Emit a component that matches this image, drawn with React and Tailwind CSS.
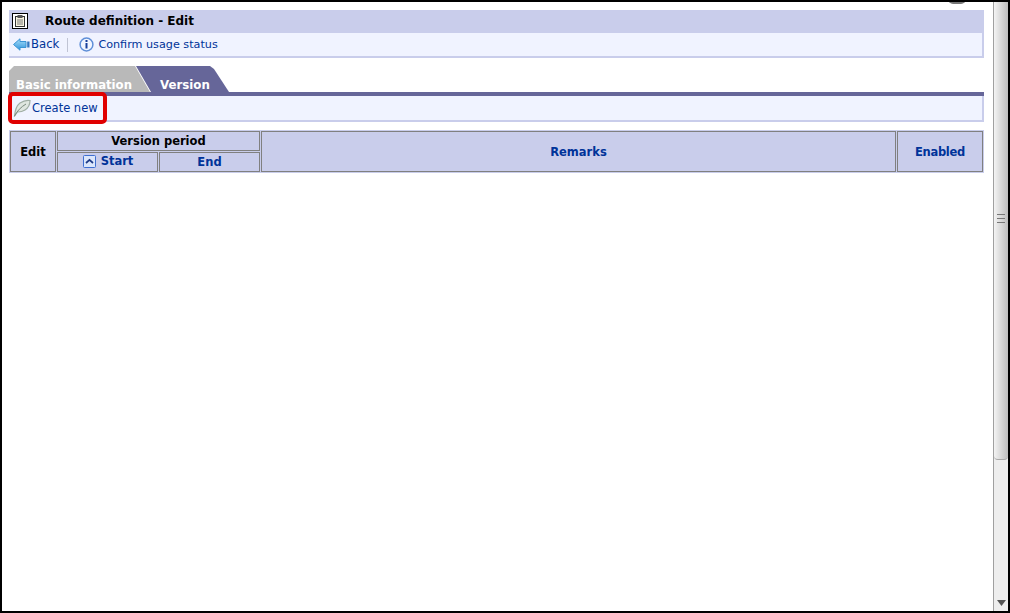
const font = { fontFamily: '"DejaVu Sans", sans-serif' };

function ClipboardIcon() {
  return (
    <svg width="16" height="16" viewBox="0 0 16 16" className="block">
      <rect x="0.5" y="0.5" width="15" height="15" fill="#fff" stroke="#000" />
      <rect x="3.5" y="3.500" width="9" height="10" fill="#f7f3df" stroke="#333" />
      <rect x="5.500" y="2" width="5" height="3" fill="#555" />
      <path d="M5 7h6M5 9h6M5 11h6" stroke="#777" strokeWidth="1" />
    </svg>
  );
}

function BackIcon() {
  return (
    <svg width="18" height="13" viewBox="0 0 18 13" className="block">
      <defs>
        <linearGradient id="backFill" x1="0" y1="0" x2="0" y2="1">
          <stop offset="0" stopColor="#a8def8" />
          <stop offset="1" stopColor="#2f94dc" />
        </linearGradient>
      </defs>
      <path d="M0.500 6.500 L7 0.800 V3.500 H13 V9.500 H7 V12.200 Z" fill="url(#backFill)" stroke="#3a94d4" strokeWidth="1" />
      <rect x="14.200" y="3.500" width="2.300" height="6" fill="#3478c0" />
    </svg>
  );
}

function InfoIcon() {
  return (
    <svg width="15" height="15" viewBox="0 0 15 15" className="block">
      <circle cx="7.5" cy="7.5" r="6.400" fill="#f2f6ff" stroke="#5f8fd8" strokeWidth="1.500" />
      <rect x="6.500" y="3" width="2" height="2" fill="#173f9c" />
      <rect x="6.500" y="6" width="2" height="5.500" fill="#173f9c" />
    </svg>
  );
}

function FeatherIcon() {
  return (
    <svg width="18" height="18" viewBox="0 0 18 18" className="block">
      <path d="M1.500 17 C2 12 3 7 7 4 C10 2 14 1 17 1.500 C17 5 15 9 12 11 C9 13 7 13 4.500 13 Z" fill="#dfe6e0" stroke="#a0aea4" strokeWidth="1.200" />
      <path d="M1.500 17 C4 12 8 8 13 5" fill="none" stroke="#78887c" strokeWidth="1" />
    </svg>
  );
}

function SortIcon() {
  return (
    <svg width="13" height="13" viewBox="0 0 13 13" className="block">
      <rect x="0.5" y="0.5" width="12" height="12" rx="1" fill="#dbe6fb" stroke="#3f6fd0" />
      <path d="M3 8 L6.500 4.800 L10 8" fill="none" stroke="#1d3a86" strokeWidth="1.700" />
    </svg>
  );
}

const cell = "border border-[#808080] bg-[#c9cdeb] p-0 text-center align-middle text-[11.5px] leading-[15px] font-bold";

export default function App() {
  return (
    <div className="relative flex h-[613px] w-[1010px] overflow-hidden border-2 border-black bg-white" style={font}>
      <div className="min-w-0 flex-1 pl-[7px] pr-[9px] pt-2">
        <div className="flex h-[23px] items-center gap-[17px] bg-[#c9cdeb] pb-[2px] pl-[3px] text-[12px] font-bold text-black">
          <ClipboardIcon />
          <span>Route definition - Edit</span>
        </div>
        <div className="flex h-[25px] items-center border-b-2 border-r-2 border-[#c9cdeb] bg-[#f0f3ff] pl-[4px] text-[11.200px] text-[#003399]">
          <BackIcon />
          <span className="text-[11.700px]">Back</span>
          <span className="ml-[8px] mr-[11px] h-[14px] w-px bg-[#c0c4d4]" />
          <InfoIcon />
          <span className="ml-[4px] pt-[1px]">Confirm usage status</span>
        </div>

        <div className="mt-2 flex h-[26px] items-end text-[12px] font-bold leading-[14px] text-white">
          <div className="flex h-[26px] w-[142px] items-end bg-[#b9b9b9] pl-[7px] text-[11.700px] [clip-path:polygon(0_5px,5px_0,126px_0,141px_26px,0_26px)]">
            Basic information
          </div>
          <div className="relative -ml-[15px] flex h-[26px] w-[93px] items-end bg-[#666699] pl-[24px] text-[11.800px] [clip-path:polygon(0_0,74px_0,78px_3px,93px_26px,15px_26px)]">
            Version
          </div>
        </div>
        <div className="h-1 bg-[#666699]" />
        <div className="flex h-[26px] items-center border-b-2 border-r-2 border-[#c9cdeb] bg-[#f0f3ff] pl-[4px] text-[11.500px] text-[#003399]">
          <FeatherIcon />
          <span className="ml-[1px] pt-[1px]">Create new</span>
        </div>

        <table className="mt-2 h-[43px] w-[975px] table-fixed border-separate border-spacing-[1px] bg-[#c9cdeb] text-[#003399]">
          <colgroup>
            <col className="w-[46px]" />
            <col className="w-[101px]" />
            <col className="w-[101px]" />
            <col />
            <col className="w-[86px]" />
          </colgroup>
          <tbody>
            <tr>
              <td rowSpan={2} className={cell + " pt-[2px] text-black"}>Edit</td>
              <td colSpan={2} className={cell + " h-[20px] pt-[1px] text-black"}>Version period</td>
              <td rowSpan={2} className={cell + " pt-[2px]"}>Remarks</td>
              <td rowSpan={2} className={cell + " pt-[2px] tracking-[-0.3px]"}>Enabled</td>
            </tr>
            <tr>
              <td className={cell + " h-[20px]"}>
                <span className="flex items-center justify-center gap-[5px] pb-[1px] pl-[1px]">
                  <SortIcon />
                  <span>Start</span>
                </span>
              </td>
              <td className={cell}>End</td>
            </tr>
          </tbody>
        </table>
      </div>

      <div className="relative flex w-[15px] shrink-0 flex-col border-l border-[#a0a0a0] bg-[#eeeeee]">
        <div className="flex h-[458px] items-start justify-center rounded-b-sm border-b border-[#a8a8a8] bg-gradient-to-r from-[#f4f4f4] to-[#bdbdbd] pt-[212px]">
          <span className="flex h-[9px] w-[8px] flex-col justify-between">
            <span className="h-px bg-[#777]" />
            <span className="h-px bg-[#777]" />
            <span className="h-px bg-[#777]" />
          </span>
        </div>
        <svg width="9" height="6" viewBox="0 0 9 6" className="absolute bottom-[5px] left-[3px]">
          <path d="M0 0H9L4.500 6Z" fill="#555" />
        </svg>
      </div>

      <div className="absolute left-[6px] top-[90px] h-[32px] w-[99px] rounded-[5px] border-4 border-[#e00000]" />
      <div className="absolute -top-[3px] left-[946px] h-[5px] w-[18px] rounded-b-full bg-[#777]" />
    </div>
  );
}
